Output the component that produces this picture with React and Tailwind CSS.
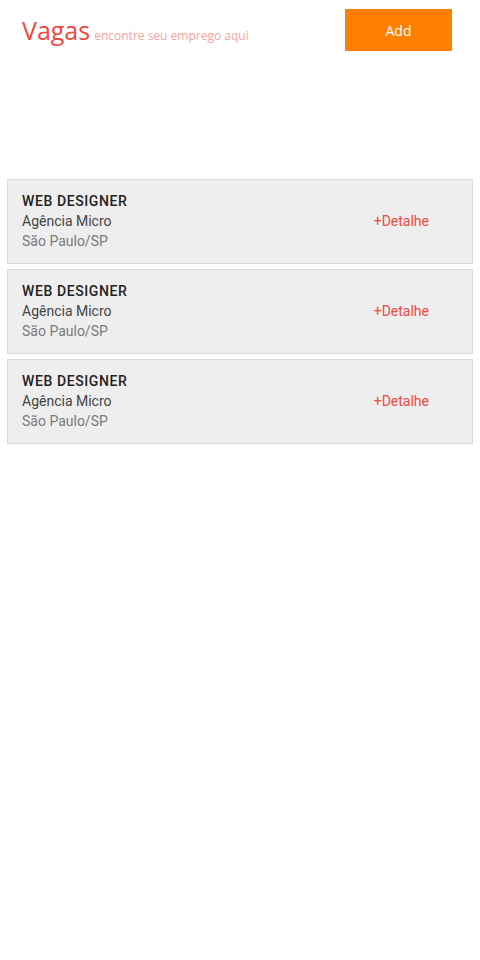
const vagas = [
  { titulo: "WEB DESIGNER", empresa: "Agência Micro", local: "São Paulo/SP" },
  { titulo: "WEB DESIGNER", empresa: "Agência Micro", local: "São Paulo/SP" },
  { titulo: "WEB DESIGNER", empresa: "Agência Micro", local: "São Paulo/SP" },
];

function Header() {
  return (
    <header className="flex items-start justify-between pl-[22px] pr-[28px] pt-[9px]">
      <div className="flex items-baseline gap-[4px] pt-[6px] font-['Open_Sans',sans-serif]">
        <h1 className="text-[25px] leading-[30px] font-medium text-[#f04a3f]">Vagas</h1>
        <span className="text-[12px] text-[#f5a3a0]">encontre seu emprego aqui</span>
      </div>
      <button className="w-[107px] h-[42px] bg-[#ff8000] text-white text-[14px] font-['Open_Sans',sans-serif]">
        Add
      </button>
    </header>
  );
}

function VagaCard({ vaga }) {
  return (
    <div className="flex items-center justify-between border border-[#d9d9d9] bg-[#eeeeee] pl-[14px] pr-[43px] pt-[11px] pb-[12px] font-['Roboto',sans-serif] text-[14px] leading-[20px]">
      <div className="flex flex-col">
        <span className="font-medium tracking-[0.6px] text-[#222222]">{vaga.titulo}</span>
        <span className="text-[#444444]">{vaga.empresa}</span>
        <span className="text-[#7a7a7a]">{vaga.local}</span>
      </div>
      <a className="text-[#f04a3f] cursor-pointer">+Detalhe</a>
    </div>
  );
}

export default function App() {
  return (
    <div className="min-h-screen bg-white">
      <Header />
      <div className="flex flex-col gap-[5px] px-[7px] mt-[128px]">
        {vagas.map((v, i) => (
          <VagaCard key={i} vaga={v} />
        ))}
      </div>
    </div>
  );
}
